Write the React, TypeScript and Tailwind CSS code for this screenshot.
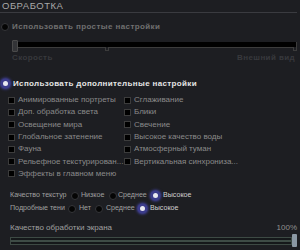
import React from 'react'

const left = [
  'Анимированные портреты',
  'Доп. обработка света',
  'Освещение мира',
  'Глобальное затенение',
  'Фауна',
  'Рельефное текстурирован...',
  'Эффекты в главном меню',
]

const right = [
  'Сглаживание',
  'Блики',
  'Свечение',
  'Высокое качество воды',
  'Атмосферный туман',
  'Вертикальная синхрониза...',
]

function Radio({ on }: { on?: boolean }) {
  if (on) {
    return (
      <span className="flex h-[9px] w-[9px] shrink-0 items-center justify-center rounded-full bg-[#3b3b8a] shadow-[0_0_3px_1px_#4a4ab8]">
        <span className="h-[5px] w-[5px] rounded-full bg-[#e8e8f0]" />
      </span>
    )
  }
  return <span className="h-[8px] w-[8px] shrink-0 rounded-full border border-[#35363a] bg-[#050505]" />
}

function Check({ label }: { label: string }) {
  return (
    <div className="flex h-[12.3px] items-center gap-[3px]">
      <span className="h-[7px] w-[7px] shrink-0 border border-[#3c3c3c] bg-black" />
      <span className="whitespace-nowrap text-[8px] text-[#8a8a8a]">{label}</span>
    </div>
  )
}

export default function App() {
  return (
    <div
      className="h-[250px] w-[300px] overflow-hidden bg-[#1d1e22] pr-[3px]"
      style={{ fontFamily: '"Liberation Sans", sans-serif' }}
    >
      {/* Header */}
      <div className="flex h-[13px] items-end border-b border-[#3a3b40] pl-[2px]">
        <span className="text-[9.5px] leading-[12px] tracking-[0.5px] text-[#a8a8a8]">ОБРАБОТКА</span>
      </div>

      {/* Simple settings */}
      <div className="mt-[10px] flex h-[8px] items-center gap-[3px] pl-[1px]">
        <Radio />
        <span className="whitespace-nowrap text-[8px] font-bold tracking-[0.4px] text-[#707070]">
          Использовать простые настройки
        </span>
      </div>

      <div className="relative ml-[12px] mt-[9px] h-[12px]">
        <div className="absolute left-[4px] right-0 top-[2px] h-[6px] border-b border-r border-[#3c3c3c] bg-black" />
        <div className="absolute left-[93px] top-[7px] h-[4px] w-[4px] border border-t-0 border-[#3c3c3c] bg-[#1d1e22]" />
        <div className="absolute right-0 top-[7px] h-[4px] w-[4px] border border-t-0 border-[#3c3c3c] bg-[#1d1e22]" />
        <div className="absolute left-0 top-0 h-[12px] w-[6px] rounded-[1px] border border-[#4a4a4a] bg-[#333437]" />
      </div>
      <div className="ml-[12px] mt-[1px] flex h-[10px] items-center justify-between pr-[2px] text-[8px] font-bold tracking-[0.4px] text-[#38393d]">
        <span>Скорость</span>
        <span>Внешний вид</span>
      </div>

      {/* Advanced settings */}
      <div className="mt-[16px] flex h-[9px] items-center gap-[3px] pl-[1px]">
        <Radio on />
        <span className="whitespace-nowrap text-[8px] font-bold tracking-[0.35px] text-[#e6e6e6]">
          Использовать дополнительные настройки
        </span>
      </div>

      <div className="mt-[6px] grid grid-cols-[116px_1fr] pl-[8px]">
        <div className="flex flex-col">
          {left.map((l) => (
            <Check key={l} label={l} />
          ))}
        </div>
        <div className="flex flex-col">
          {right.map((l) => (
            <Check key={l} label={l} />
          ))}
        </div>
      </div>

      {/* Quality radios */}
      <div className="mt-[9px] flex flex-col whitespace-nowrap pl-[10px] text-[7.1px] text-[#a0a0a0]">
        <div className="flex h-[13px] items-center">
          <span className="w-[61px] shrink-0">Качество текстур</span>
          <Radio />
          <span className="ml-[2px] w-[28px] shrink-0">Низкое</span>
          <Radio />
          <span className="ml-[1px] w-[33px] shrink-0">Среднее</span>
          <Radio on />
          <span className="ml-[3px] text-[#d0d0d0]">Высокое</span>
        </div>
        <div className="flex h-[13px] items-center">
          <span className="w-[58px] shrink-0">Подробные тени</span>
          <Radio />
          <span className="ml-[3px] w-[16px] shrink-0">Нет</span>
          <Radio />
          <span className="ml-[3px] w-[32px] shrink-0">Среднее</span>
          <Radio on />
          <span className="ml-[3px] text-[#d0d0d0]">Высокое</span>
        </div>
      </div>

      {/* Screen processing */}
      <div className="mt-[8px] flex h-[10px] items-center justify-between whitespace-nowrap pl-[10px] text-[8px] text-[#a0a0a0]">
        <span>Качество обработки экрана</span>
        <span className="text-[#909090]">100%</span>
      </div>
      <div className="relative ml-[10px] mt-[1px] h-[13px]">
        <div className="absolute left-0 right-[5px] top-[3px] h-[8px] border border-[#3d4a44] bg-[#15181a]">
          <div className="mt-[2px] h-[2px] bg-[#3e4c46]" />
        </div>
        <div className="absolute right-0 top-0 h-[13px] w-[5px] rounded-[1px] bg-[#8b98a4]" />
      </div>
    </div>
  )
}
